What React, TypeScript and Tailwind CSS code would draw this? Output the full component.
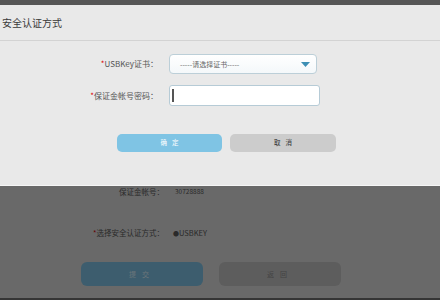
export default function App() {
  return (
    <div
      className="relative flex h-[300px] w-[440px] flex-col overflow-hidden bg-[#d2d2d2]"
      style={{ fontFamily: '"Noto Sans CJK SC", "Noto Sans", sans-serif' }}
    >
      {/* page beneath the dialog */}
      <div className="h-[5px] bg-[#acacac]" />
      <div className="flex flex-col pt-[181px]">
        <div className="flex h-[12px] items-center text-[7.5px] text-[#555]">
          <span className="w-[164px] text-right">保证金帐号：</span>
          <span className="ml-[11px] text-[6.5px]">30728888</span>
        </div>
        <div className="mt-[29px] flex h-[12px] items-center text-[7.5px] text-[#555]">
          <span className="w-[164px] text-right">
            <span className="text-[#c00]">*</span>选择安全认证方式：
          </span>
          <span className="ml-[9px] flex items-center text-[7.5px]">
            <span className="text-[6px]">●</span>USBKEY
          </span>
        </div>
        <div className="mt-[23px] flex gap-[16px] pl-[81px]">
          <button className="h-[24px] w-[122px] rounded-[6px] bg-[#7abbdc] text-[7px] tracking-[6px] text-white/70">
            提交
          </button>
          <button className="h-[24px] w-[122px] rounded-[6px] bg-[#bababa] text-[7px] tracking-[6px] text-[#888]">
            返回
          </button>
        </div>
      </div>
      <div className="flex-1" />
      <div className="h-[2px] bg-[#6a6a6a]" />

      {/* dim overlay */}
      <div className="absolute inset-0 bg-black/50" />

      {/* dialog */}
      <div className="absolute left-0 right-0 top-[5px] h-[181px] border-b border-[#f6f6f6] bg-[#e9e9e9]">
        <div className="flex h-[36px] items-center border-b border-[#d3d3d3] px-[2px] text-[10px] text-[#3a3a3a]">
          安全认证方式
        </div>
        <div className="flex flex-col pt-[13px]">
          <div className="flex items-center">
            <span className="w-[158px] text-right text-[8px] text-[#555]">
              <span className="text-[#d00]">*</span>USBKey证书：
            </span>
            <div className="ml-[11px] flex h-[20px] w-[148px] items-center justify-between rounded-[4px] border border-[#bccfd8] bg-gradient-to-b from-white to-[#f4f8fa] pl-[10px] pr-[6px]">
              <span className="text-[7px] text-[#666]">-----请选择证书-----</span>
              <svg width="9" height="5" viewBox="0 0 9 5">
                <path d="M0 0 L9 0 L4.5 5 Z" fill="#3d8fb4" />
              </svg>
            </div>
          </div>
          <div className="mt-[11px] flex items-center">
            <span className="w-[158px] text-right text-[8px] text-[#555]">
              <span className="text-[#d00]">*</span>保证金帐号密码：
            </span>
            <div className="ml-[11px] flex h-[21px] w-[151px] items-center rounded-[3px] border border-[#b6cbd6] bg-white pl-[2px]">
              <span className="h-[13px] w-[1.5px] bg-[#555]" />
            </div>
          </div>
          <div className="mt-[28px] flex gap-[8px] pl-[117px]">
            <button className="h-[18px] w-[105px] rounded-[5px] bg-[#7fc4e4] pl-[5px] text-[6.5px] tracking-[5px] text-white">
              确定
            </button>
            <button className="h-[18px] w-[106px] rounded-[5px] bg-[#cccccc] pl-[5px] text-[6.5px] tracking-[5px] text-[#333]">
              取消
            </button>
          </div>
        </div>
      </div>
    </div>
  );
}
